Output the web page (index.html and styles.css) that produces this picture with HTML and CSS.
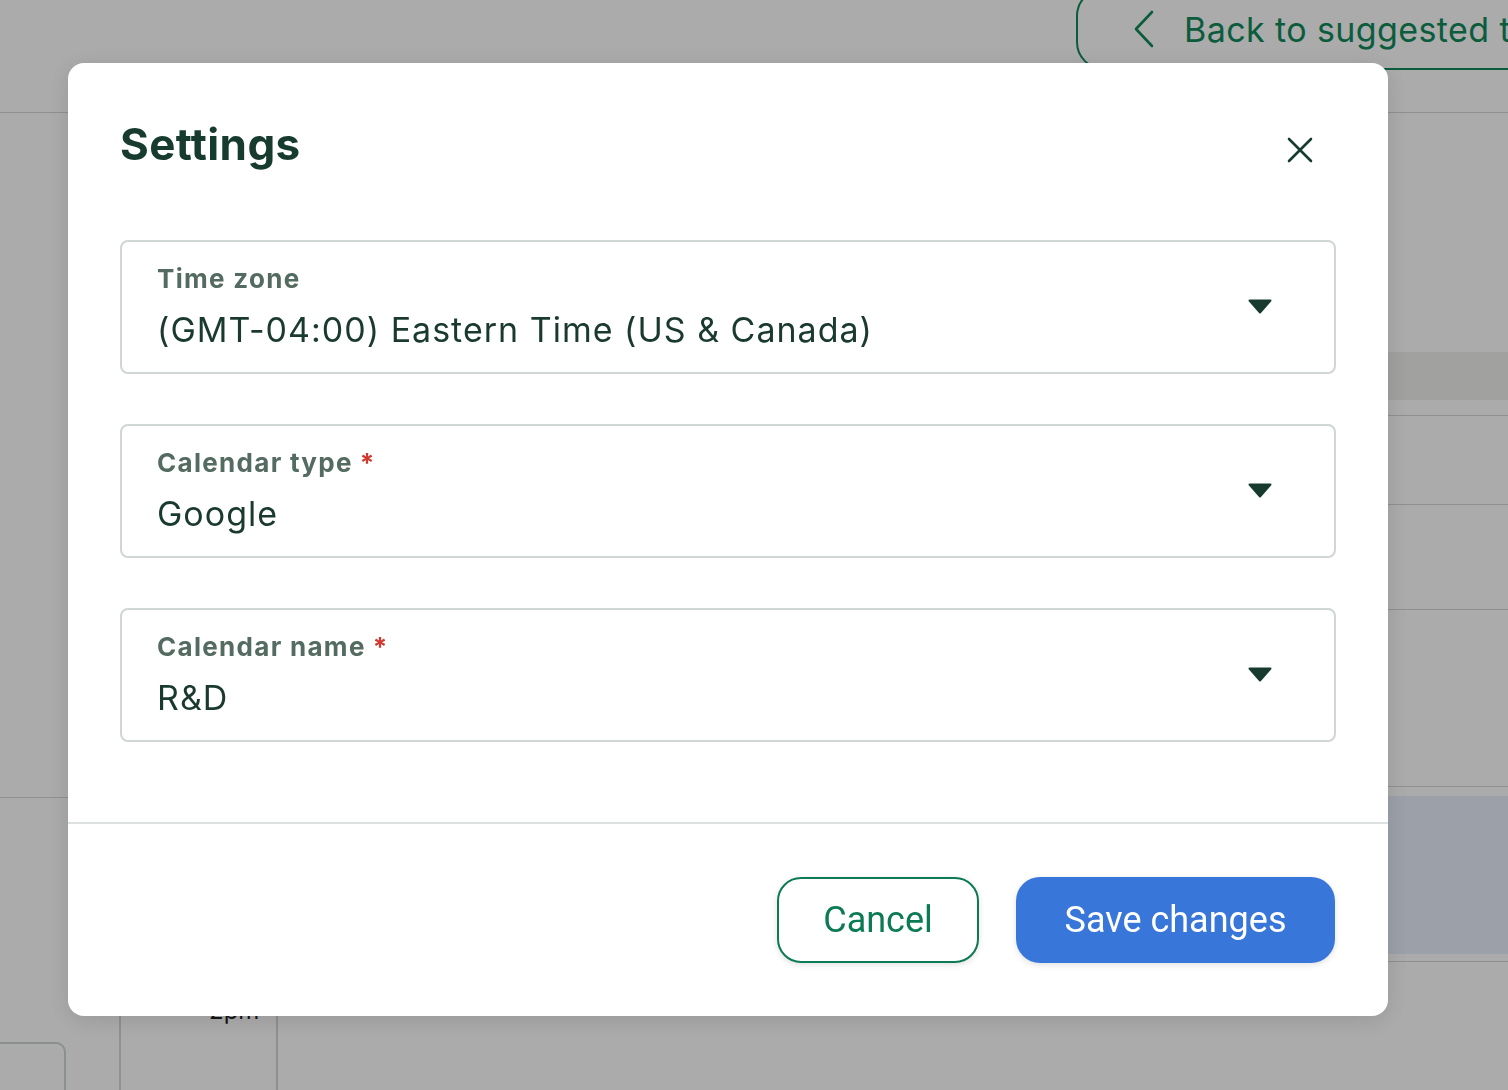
FILE: index.html
```html
<!DOCTYPE html>
<html lang="en">
  <head>
    <meta charset="UTF-8" />
    <meta name="viewport" content="width=device-width, initial-scale=1.0" />
    <title>Settings</title>
    <link rel="stylesheet" href="styles.css">
  </head>
  <body>
    <div class="page">
      <header class="topbar">
        <a href="#" class="back-btn">
          <svg class="chevron" width="22" height="38" viewBox="0 0 22 38">
            <polyline points="19,2 3,19 19,36" />
          </svg>
          <span>Back to suggested times</span>
        </a>
      </header>
      <div class="main">
        <section class="schedule">
          <div class="schedule-top"></div>
          <div class="week">
            <div class="week-card"></div>
            <div class="slot slot-time"><span>2pm</span></div>
            <div class="slot"></div>
          </div>
        </section>
        <aside class="sidebar">
          <div class="side-gap"></div>
          <div class="side-band"></div>
          <div class="side-row row-a"></div>
          <div class="side-row row-b"></div>
          <div class="side-row row-c"></div>
          <div class="side-row row-d"></div>
          <div class="side-slot"></div>
          <div class="side-row row-e"></div>
        </aside>
      </div>
    </div>

    <div class="overlay">
      <div class="modal" role="dialog" aria-labelledby="settings-title">
        <div class="modal-content">
          <div class="modal-header">
            <h2 class="modal-title" id="settings-title">Settings</h2>
            <button class="close-btn" aria-label="Close">
              <svg width="26" height="26" viewBox="0 0 26 26">
                <line x1="2" y1="2" x2="24" y2="24" />
                <line x1="24" y1="2" x2="2" y2="24" />
              </svg>
            </button>
          </div>

          <div class="field-list">
            <div class="select-field">
              <div class="select-text">
                <div class="select-label">Time zone</div>
                <div class="select-value">(GMT-04:00) Eastern Time (US &amp; Canada)</div>
              </div>
              <svg class="caret" width="24" height="15" viewBox="0 0 24 15">
                <path d="M1.5 1.5 H22.5 L12 13.5 Z" />
              </svg>
            </div>
            <div class="select-field">
              <div class="select-text">
                <div class="select-label">Calendar type<span class="required">*</span></div>
                <div class="select-value">Google</div>
              </div>
              <svg class="caret" width="24" height="15" viewBox="0 0 24 15">
                <path d="M1.5 1.5 H22.5 L12 13.5 Z" />
              </svg>
            </div>
            <div class="select-field">
              <div class="select-text">
                <div class="select-label">Calendar name<span class="required">*</span></div>
                <div class="select-value">R&amp;D</div>
              </div>
              <svg class="caret" width="24" height="15" viewBox="0 0 24 15">
                <path d="M1.5 1.5 H22.5 L12 13.5 Z" />
              </svg>
            </div>
          </div>
        </div>

        <div class="modal-footer">
          <button class="btn btn-secondary">Cancel</button>
          <button class="btn btn-primary">Save changes</button>
        </div>
      </div>
    </div>
  </body>
</html>
```

FILE: styles.css
```css
body {
  margin: 0;
  padding: 0;
  font-family: Inter, "Noto Sans", sans-serif;
  overflow: hidden;
  background: #fff;
}
.page {
  height: 1090px;
  overflow: hidden;
}

/* page underneath the dialog */
.topbar {
  display: flex;
  height: 112px;
  border-bottom: 1px solid #d5d8d7;
}
.back-btn {
  display: flex;
  align-items: center;
  gap: 29px;
  flex-shrink: 0;
  box-sizing: border-box;
  height: 82px;
  margin-top: -12px;
  margin-left: 1076px;
  padding: 0 40px 0 55px;
  border: 2px solid #118a5b;
  border-radius: 28px;
  color: #118a5b;
  font-size: 34px;
  letter-spacing: 0.4px;
  white-space: nowrap;
  text-decoration: none;
}
.chevron polyline {
  fill: none;
  stroke: #118a5b;
  stroke-width: 2.6;
  stroke-linecap: round;
  stroke-linejoin: round;
}
.main {
  display: grid;
  grid-template-columns: 760px 1fr;
  height: 977px;
}
.schedule-top {
  height: 684px;
  border-bottom: 1px solid #d5d8d7;
}
.week {
  display: flex;
  height: 292px;
}
.week-card {
  width: 64px;
  margin-top: 244px;
  border-top: 2px solid #cfd5d2;
  border-right: 2px solid #cfd5d2;
  border-top-right-radius: 10px;
  margin-right: 53px;
}
.slot {
  width: 155px;
  border-left: 2px solid #d3d8d6;
}
.slot-time {
  padding-top: 199px;
  padding-left: 88px;
  box-sizing: border-box;
  width: 157px;
  font-size: 24px;
  line-height: 28px;
  color: #1f1f1f;
}
.sidebar {
  display: flex;
  flex-direction: column;
}
.side-gap {
  height: 239px;
}
.side-band {
  height: 48px;
  background: #f0f1ef;
}
.side-row {
  border-bottom: 1px solid #d5d8d7;
}
.row-a { height: 15px; }
.row-b { height: 88px; }
.row-c { height: 104px; }
.row-d { height: 176px; }
.row-e { height: 7px; }
.side-slot {
  height: 158px;
  margin-top: 9px;
  background: #e9effd;
}

/* dialog */
.overlay {
  position: fixed;
  inset: 0;
  background: rgba(0, 0, 0, 0.33);
  padding: 63px 0 0 68px;
}
.modal {
  width: 1320px;
  height: 953px;
  background: #fff;
  border-radius: 16px;
  box-shadow: 0 4px 24px rgba(0, 0, 0, 0.12);
  overflow: hidden;
}
.modal-content {
  padding: 55px 52px 80px;
}
.modal-header {
  display: flex;
  justify-content: space-between;
  align-items: flex-start;
  height: 122px;
}
.modal-title {
  margin: 0;
  font-size: 44px;
  line-height: 52px;
  font-weight: 700;
  letter-spacing: 0.4px;
  color: #173b2f;
}
.close-btn {
  width: 48px;
  height: 48px;
  margin-top: 8px;
  margin-right: 12px;
  padding: 0;
  border: none;
  background: none;
  display: flex;
  align-items: center;
  justify-content: center;
  cursor: pointer;
}
.close-btn line {
  stroke: #173b2f;
  stroke-width: 2.6;
  stroke-linecap: round;
}
.field-list {
  display: flex;
  flex-direction: column;
  gap: 50px;
}
.select-field {
  display: flex;
  align-items: center;
  justify-content: space-between;
  box-sizing: border-box;
  height: 134px;
  padding: 21px 62px 22px 35px;
  border: 2px solid #cfd6d3;
  border-radius: 8px;
}
.select-label {
  font-size: 26px;
  line-height: 32px;
  font-weight: 650;
  letter-spacing: 1.3px;
  color: #546b61;
  margin-bottom: 15px;
}
.required {
  margin-left: 7px;
  color: #d23a2f;
}
.select-value {
  font-size: 34px;
  line-height: 40px;
  letter-spacing: 1px;
  color: #1a3a2f;
}
.caret path {
  fill: #173b2f;
  stroke: #173b2f;
  stroke-width: 2;
  stroke-linejoin: round;
}
.modal-footer {
  display: flex;
  justify-content: flex-end;
  gap: 37px;
  padding: 53px 53px 53px;
  border-top: 2px solid #dde2e0;
}
.btn {
  height: 86px;
  border-radius: 24px;
  font-family: Roboto, "Liberation Sans", sans-serif;
  font-size: 36px;
  cursor: pointer;
  box-shadow: 0 2px 6px rgba(0, 0, 0, 0.12);
}
.btn-secondary {
  width: 202px;
  background: #fff;
  border: 2px solid #0b7a55;
  color: #0b7a55;
}
.btn-primary {
  width: 319px;
  background: #3876d9;
  border: none;
  color: #fff;
}
```
